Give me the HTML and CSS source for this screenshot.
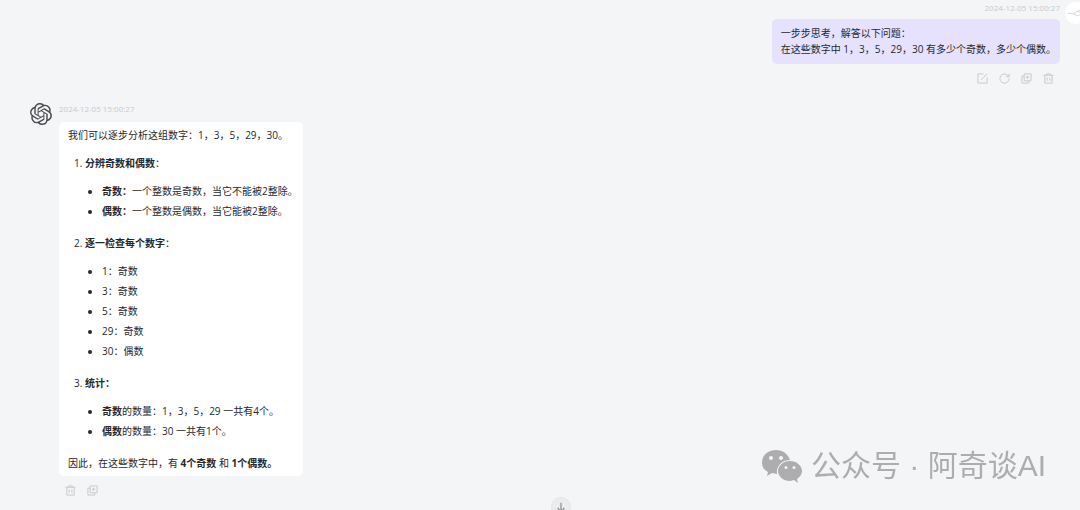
FILE: index.html
```html
<!DOCTYPE html>
<html lang="zh-CN">

<head>
  <meta charset="UTF-8">
  <meta name="viewport" content="width=device-width, initial-scale=1.0">
  <title>Chat</title>
  <link rel="stylesheet" href="styles.css">
</head>

<body>

  <!-- Icons shared by the message toolbars -->
  <svg class="sprite" aria-hidden="true">
    <symbol id="icon-trash" viewBox="0 0 24 24">
      <path d="M1 5h22M8 5V2h8v3M4 5v17h16V5M9 10v7M15 10v7" />
    </symbol>
    <symbol id="icon-copy" viewBox="0 0 24 24">
      <path d="M7 2h15v15H7zM7 7H2v15h15v-5M14 6v7M11 9h7" />
    </symbol>
  </svg>

  <main class="chat">
    <!-- User message -->
    <section class="message user">
      <div class="content">
        <time class="time" datetime="2024-12-05T15:00:27">2024-12-05 15:00:27</time>
        <div class="bubble">
          <p>一步步思考，解答以下问题：<br>在这些数字中 1，3，5，29，30 有多少个奇数，多少个偶数。</p>
        </div>
        <div class="actions">
          <button type="button" aria-label="编辑">
            <svg viewBox="0 0 24 24"><path d="M14 2H2v20h20V10M9 15L22 2" /></svg>
          </button>
          <button type="button" aria-label="重新生成">
            <svg viewBox="0 0 24 24"><path d="M22 12a10 10 0 1 1-3-7l3 3M22 2v6h-6" /></svg>
          </button>
          <button type="button" aria-label="复制"><svg><use href="#icon-copy" /></svg></button>
          <button type="button" aria-label="删除"><svg><use href="#icon-trash" /></svg></button>
        </div>
      </div>
      <div class="avatar">
        <svg viewBox="0 0 24 24">
          <path d="M1 13c4-2 5 1 8 0s3-4 6-3 4 4 8 4M9 13c3 3 7 3 10 0M14 10c3-3 6 0 5 3" />
        </svg>
      </div>
    </section>

    <!-- Assistant message -->
    <section class="message assistant">
      <div class="avatar">
        <svg viewBox="0 0 24 24">
          <path d="M22.282 9.821a5.985 5.985 0 0 0-.516-4.91 6.046 6.046 0 0 0-6.51-2.9A6.065 6.065 0 0 0 4.981 4.182a5.985 5.985 0 0 0-3.998 2.9 6.046 6.046 0 0 0 .743 7.097 5.98 5.98 0 0 0 .511 4.911 6.051 6.051 0 0 0 6.515 2.9A5.985 5.985 0 0 0 13.26 24a6.056 6.056 0 0 0 5.772-4.206 5.99 5.99 0 0 0 3.998-2.9 6.056 6.056 0 0 0-.748-7.073zM13.26 22.43a4.476 4.476 0 0 1-2.876-1.041l.141-.081 4.779-2.758a.795.795 0 0 0 .393-.681v-6.737l2.02 1.169a.071.071 0 0 1 .038.052v5.583a4.504 4.504 0 0 1-4.495 4.494zM3.6 18.304a4.471 4.471 0 0 1-.535-3.014l.142.085 4.783 2.759a.771.771 0 0 0 .78 0l5.843-3.369v2.332a.08.08 0 0 1-.033.062L9.74 19.95a4.5 4.5 0 0 1-6.14-1.646zM2.34 7.896a4.485 4.485 0 0 1 2.366-1.973V11.6a.766.766 0 0 0 .388.677l5.815 3.354-2.02 1.169a.076.076 0 0 1-.071 0l-4.83-2.787A4.504 4.504 0 0 1 2.34 7.872zm16.597 3.855l-5.833-3.387L15.119 7.2a.076.076 0 0 1 .071 0l4.83 2.791a4.494 4.494 0 0 1-.676 8.105v-5.678a.79.79 0 0 0-.407-.667zm2.01-3.023l-.141-.085-4.774-2.782a.776.776 0 0 0-.785 0L9.409 9.23V6.897a.066.066 0 0 1 .028-.061l4.83-2.787a4.5 4.5 0 0 1 6.68 4.66zm-12.64 4.135l-2.02-1.164a.08.08 0 0 1-.038-.057V6.075a4.5 4.5 0 0 1 7.375-3.453l-.142.08L8.704 5.46a.795.795 0 0 0-.393.681zm1.097-2.365l2.602-1.5 2.607 1.5v2.999l-2.597 1.5-2.607-1.5z" />
        </svg>
      </div>
      <div class="content">
        <time class="time" datetime="2024-12-05T15:00:27">2024-12-05 15:00:27</time>
        <div class="bubble">
          <p>我们可以逐步分析这组数字：1，3，5，29，30。</p>
          <ol>
            <li>
              <strong>分辨奇数和偶数</strong>：
              <ul>
                <li><strong>奇数：</strong>一个整数是奇数，当它不能被2整除。</li>
                <li><strong>偶数：</strong>一个整数是偶数，当它能被2整除。</li>
              </ul>
            </li>
            <li>
              <strong>逐一检查每个数字</strong>：
              <ul>
                <li>1：奇数</li>
                <li>3：奇数</li>
                <li>5：奇数</li>
                <li>29：奇数</li>
                <li>30：偶数</li>
              </ul>
            </li>
            <li>
              <strong>统计：</strong>
              <ul>
                <li><strong>奇数</strong>的数量：1，3，5，29 一共有4个。</li>
                <li><strong>偶数</strong>的数量：30 一共有1个。</li>
              </ul>
            </li>
          </ol>
          <p>因此，在这些数字中，有 <strong>4个奇数</strong> 和 <strong>1个偶数。</strong></p>
        </div>
        <div class="actions">
          <button type="button" aria-label="删除"><svg><use href="#icon-trash" /></svg></button>
          <button type="button" aria-label="复制"><svg><use href="#icon-copy" /></svg></button>
        </div>
      </div>
    </section>
  </main>

  <button type="button" class="scroll-down" aria-label="滚动到底部">
    <svg viewBox="0 0 24 24"><path d="M12 2v20M4 14l8 8 8-8" /></svg>
  </button>

  <!-- Account watermark -->
  <div class="watermark">
    <svg viewBox="0 0 40 33">
      <path fill-rule="evenodd" d="M14 0C6 0 0 5 0 13c0 4 2 7 6 9l-1 4 5-3 5 1C14 16 20 10 28 10 26 4 21 0 14 0zM9 6a2 2 0 1 1 0 4 2 2 0 0 1 0-4zM19 6a2 2 0 1 1 0 4 2 2 0 0 1 0-4z" />
      <path fill-rule="evenodd" d="M28 11c-7 0-12 5-12 10s5 10 12 10l4-1 4 3-1-4c3-2 5-5 5-8 0-5-5-10-12-10zM24 16a1 1 0 1 1 0 3 1 1 0 0 1 0-3zM32 16a1 1 0 1 1 0 3 1 1 0 0 1 0-3z" />
    </svg>
    <span>公众号 · 阿奇谈AI</span>
  </div>

</body>

</html>
```
FILE: styles.css
```css
/* Global Styles */
* {
  box-sizing: border-box;
}

body {
  margin: 0;
  min-height: 100vh;
  overflow: hidden;
  background-color: #f4f5f7;
  color: #24292f;
  font-family: "Open Sans", "Noto Sans CJK SC", sans-serif;
  font-size: 10px;
  line-height: 16px;
}

p,
ol,
ul {
  margin: 0;
  padding: 0;
}

button {
  padding: 0;
  border: none;
  background: none;
  cursor: pointer;
}

svg {
  display: block;
}

.sprite {
  display: none;
}

/* Messages */
.chat {
  padding: 2px 0 0 30px;
}

.message {
  display: flex;
}

.content {
  display: flex;
  flex-direction: column;
  align-items: flex-start;
}

.time {
  margin-bottom: 6px;
  color: #c9c9cd;
  font-size: 8px;
  line-height: 11px;
}

.bubble {
  padding: 5px 5px 5px 9px;
  border-radius: 5px;
  background-color: #fff;
}

.actions {
  display: flex;
  gap: 11px;
  padding: 9px 6px;
}

.actions svg {
  width: 11px;
  height: 11px;
  fill: none;
  stroke: #c6c6ca;
  stroke-width: 2;
}

/* User message */
.user {
  justify-content: flex-end;
  gap: 5px;
}

.user .content {
  align-items: flex-end;
}

.user .bubble {
  padding: 6px 4px 7px 9px;
  background-color: #e6e1fd;
}

.user .avatar {
  width: 22px;
  height: 22px;
  margin-right: -7px;
  border-radius: 50%;
  background-color: #fff;
}

.user .avatar svg {
  width: 18px;
  height: 22px;
  margin-left: 2px;
  fill: none;
  stroke: #c8c8c8;
  stroke-width: 1;
}

/* Assistant message */
.assistant {
  gap: 7px;
  margin-top: 10px;
}

.assistant .time {
  margin-bottom: 8px;
}

.assistant .avatar svg {
  width: 22px;
  height: 22px;
  fill: #4b4b50;
}

.bubble ol {
  margin: 12px 0 16px;
  padding-left: 17px;
}

.bubble ol > li + li {
  margin-top: 16px;
}

.bubble ul {
  margin-top: 12px;
  padding-left: 17px;
  list-style: disc;
}

.bubble ul li + li {
  margin-top: 4px;
}

/* Scroll button, floats over the chat */
.scroll-down {
  position: fixed;
  bottom: -7px;
  left: 51%;
  display: flex;
  justify-content: center;
  align-items: center;
  width: 20px;
  height: 20px;
  border: 1px solid #e2e3e5;
  border-radius: 50%;
  background-color: #ebecee;
}

.scroll-down svg {
  width: 10px;
  height: 10px;
  fill: none;
  stroke: #8e8e92;
  stroke-width: 3;
}

/* Watermark, floats over the chat */
.watermark {
  position: fixed;
  right: 34px;
  bottom: 25px;
  display: flex;
  align-items: center;
  gap: 9px;
  color: #adadaf;
  font-family: "Liberation Sans", "Noto Sans CJK SC", sans-serif;
  font-size: 30px;
  line-height: 38px;
}

.watermark svg {
  width: 40px;
  height: 33px;
  fill: #adadaf;
}
```
